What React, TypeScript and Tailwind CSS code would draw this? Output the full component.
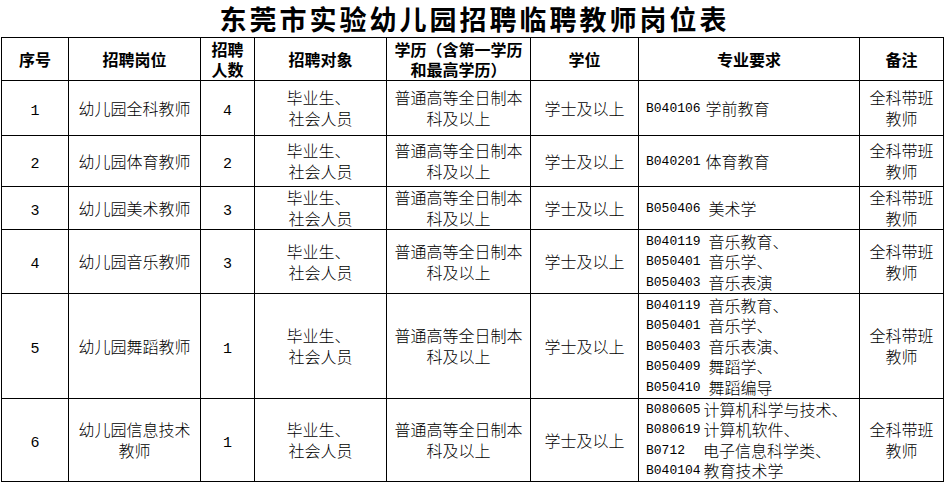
import React from "react";

type Major = { code: string; gap: string; name: string };

type Row = {
  no: string;
  post: string[];
  count: string;
  majors: Major[];
  height: string;
};

const rows: Row[] = [
  {
    no: "1",
    post: ["幼儿园全科教师"],
    count: "4",
    majors: [{ code: "B040106", gap: "ml-[5px]", name: "学前教育" }],
    height: "h-[55px]",
  },
  {
    no: "2",
    post: ["幼儿园体育教师"],
    count: "2",
    majors: [{ code: "B040201", gap: "ml-[5px]", name: "体育教育" }],
    height: "h-[51px]",
  },
  {
    no: "3",
    post: ["幼儿园美术教师"],
    count: "3",
    majors: [{ code: "B050406", gap: "ml-[8px]", name: "美术学" }],
    height: "h-[42px]",
  },
  {
    no: "4",
    post: ["幼儿园音乐教师"],
    count: "3",
    majors: [
      { code: "B040119", gap: "ml-[8px]", name: "音乐教育、" },
      { code: "B050401", gap: "ml-[8px]", name: "音乐学、" },
      { code: "B050403", gap: "ml-[8px]", name: "音乐表演" },
    ],
    height: "h-[64px]",
  },
  {
    no: "5",
    post: ["幼儿园舞蹈教师"],
    count: "1",
    majors: [
      { code: "B040119", gap: "ml-[8px]", name: "音乐教育、" },
      { code: "B050401", gap: "ml-[8px]", name: "音乐学、" },
      { code: "B050403", gap: "ml-[8px]", name: "音乐表演、" },
      { code: "B050409", gap: "ml-[8px]", name: "舞蹈学、" },
      { code: "B050410", gap: "ml-[8px]", name: "舞蹈编导" },
    ],
    height: "h-[105px]",
  },
  {
    no: "6",
    post: ["幼儿园信息技术", "教师"],
    count: "1",
    majors: [
      { code: "B080605", gap: "ml-[3px]", name: "计算机科学与技术、" },
      { code: "B080619", gap: "ml-[3px]", name: "计算机软件、" },
      { code: "B0712", gap: "ml-[18px]", name: "电子信息科学类、" },
      { code: "B040104", gap: "ml-[3px]", name: "教育技术学" },
    ],
    height: "h-[83px]",
  },
];

function Num({ children, big }: { children: React.ReactNode; big?: boolean }) {
  return (
    <span
      className={
        big
          ? "font-['Liberation_Mono',monospace] text-[15px] leading-none"
          : "font-['Liberation_Mono',monospace] text-[13px] leading-none"
      }
    >
      {children}
    </span>
  );
}

export default function App() {
  const cell = "border border-black text-center align-middle p-0";
  return (
    <div className="w-[945px] h-[482px] bg-white text-black font-['Noto_Sans_CJK_SC',sans-serif] overflow-hidden">
      <h1 className="h-[37px] flex items-center justify-center text-[27px] font-bold tracking-[3px] leading-none pl-[4px]">
        东莞市实验幼儿园招聘临聘教师岗位表
      </h1>
      <table className="ml-[1px] w-[942px] table-fixed border-collapse text-[16px] leading-[21px]">
        <colgroup>
          <col className="w-[67px]" />
          <col className="w-[132px]" />
          <col className="w-[54px]" />
          <col className="w-[132px]" />
          <col className="w-[144px]" />
          <col className="w-[108px]" />
          <col className="w-[221px]" />
          <col className="w-[84px]" />
        </colgroup>
        <thead>
          <tr className="h-[43px] font-bold">
            <th className={cell}>序号</th>
            <th className={cell}>招聘岗位</th>
            <th className={cell}>
              <div className="h-[20px] leading-[20px]">招聘</div>
              <div className="h-[20px] leading-[20px]">人数</div>
            </th>
            <th className={cell}>招聘对象</th>
            <th className={cell}>
              <div className="h-[20px] leading-[20px]">学历（含第一学历</div>
              <div className="h-[20px] leading-[20px]">和最高学历）</div>
            </th>
            <th className={cell}>学位</th>
            <th className={cell}>专业要求</th>
            <th className={cell}>备注</th>
          </tr>
        </thead>
        <tbody className="font-light">
          {rows.map((r) => (
            <tr key={r.no} className={r.height}>
              <td className={cell}>
                <Num big>{r.no}</Num>
              </td>
              <td className={cell}>
                {r.post.map((p, i) => (
                  <div key={i} className="h-[21px]">
                    {p}
                  </div>
                ))}
              </td>
              <td className={cell}>
                <Num big>{r.count}</Num>
              </td>
              <td className={cell}>
                <div className="h-[21px] pr-[4px]">毕业生、</div>
                <div className="h-[21px]">社会人员</div>
              </td>
              <td className={cell}>
                <div className="h-[21px]">普通高等全日制本</div>
                <div className="h-[21px]">科及以上</div>
              </td>
              <td className={cell}>学士及以上</td>
              <td className="border border-black align-middle p-0 pl-[7px] text-left">
                {r.majors.map((m, i) => (
                  <div key={i} className="h-[20.5px] flex items-center whitespace-nowrap">
                    <Num>{m.code}</Num>
                    <span className={m.gap}>{m.name}</span>
                  </div>
                ))}
              </td>
              <td className={cell}>
                <div className="h-[21px]">全科带班</div>
                <div className="h-[21px]">教师</div>
              </td>
            </tr>
          ))}
        </tbody>
      </table>
    </div>
  );
}
